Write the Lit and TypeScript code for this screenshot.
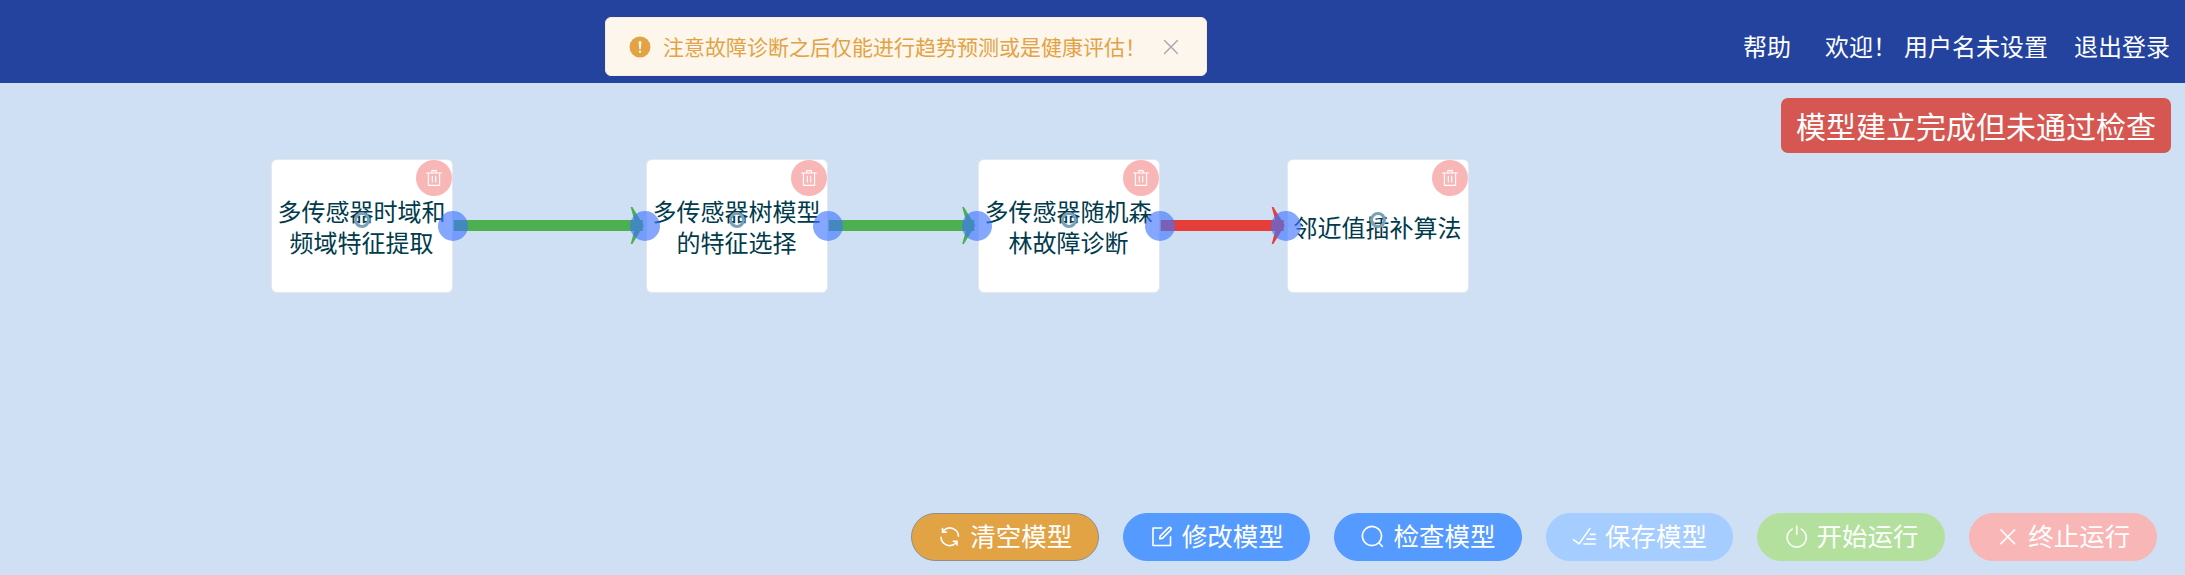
import { LitElement, html, css, svg } from "lit";
import { customElement } from "lit/decorators.js";

const ICONS: Record<string, string> = {
  refresh:
    "M771.776 794.88A384 384 0 0 1 128 512h64a320 320 0 0 0 555.712 216.448H654.72a32 32 0 1 1 0-64h149.056a32 32 0 0 1 32 32v148.928a32 32 0 1 1-64 0v-50.56zM276.288 295.616h92.992a32 32 0 0 1 0 64H220.16a32 32 0 0 1-32-32V178.56a32 32 0 0 1 64 0v50.56A384 384 0 0 1 896.128 512h-64a320 320 0 0 0-555.776-216.384z",
  edit:
    "M832 512a32 32 0 1 1 64 0v352a32 32 0 0 1-32 32H160a32 32 0 0 1-32-32V160a32 32 0 0 1 32-32h352a32 32 0 0 1 0 64H192v640h640V512zM469.952 554.24l52.8-7.552L847.104 222.4a32 32 0 1 0-45.248-45.248L477.44 501.44l-7.552 52.8zm422.4-422.4a96 96 0 0 1 0 135.808l-331.84 331.84a32 32 0 0 1-18.112 9.088L436.8 623.68a32 32 0 0 1-36.224-36.224l15.104-105.6a32 32 0 0 1 9.024-18.112l331.904-331.84a96 96 0 0 1 135.744 0z",
  search:
    "m795.904 750.72 124.992 124.928a32 32 0 0 1-45.248 45.248L750.656 795.904a416 416 0 1 1 45.248-45.248zM480 832a352 352 0 1 0 0-704 352 352 0 0 0 0 704z",
  finished:
    "M280.768 753.728 691.456 167.04a32 32 0 1 1 52.416 36.672L314.24 817.472a32 32 0 0 1-45.44 7.296l-230.4-172.8a32 32 0 0 1 38.4-51.2l203.968 152.96zM736 448a32 32 0 1 1 0-64h192a32 32 0 1 1 0 64H736zM608 640a32 32 0 0 1 0-64h319.936a32 32 0 1 1 0 64H608zM480 832a32 32 0 1 1 0-64h447.936a32 32 0 1 1 0 64H480z",
  power:
    "M352 159.872V230.4a352 352 0 1 0 320 0v-70.528A416.128 416.128 0 0 1 512 960a416 416 0 0 1-160-800.128zM512 64q32 0 32 32v320q0 32-32 32t-32-32V96q0-32 32-32z",
  close:
    "M764.288 214.592 512 466.88 259.712 214.592a31.936 31.936 0 0 0-45.12 45.12L466.752 512 214.528 764.224a31.936 31.936 0 1 0 45.12 45.184L512 557.184l252.288 252.288a31.936 31.936 0 0 0 45.12-45.12L557.12 512.064l252.288-252.352a31.936 31.936 0 1 0-45.12-45.184z",
  trash:
    "M160 256H96a32 32 0 0 1 0-64h256V95.936a32 32 0 0 1 32-32h256a32 32 0 0 1 32 32V192h256a32 32 0 1 1 0 64h-64v672a32 32 0 0 1-32 32H192a32 32 0 0 1-32-32V256zm448-64v-64H416v64h192zM224 896h576V256H224v640zm192-128a32 32 0 0 1-32-32V416a32 32 0 0 1 64 0v320a32 32 0 0 1-32 32zm192 0a32 32 0 0 1-32-32V416a32 32 0 0 1 64 0v320a32 32 0 0 1-32 32z",
  warning:
    "M512 64a448 448 0 1 1 0 896 448 448 0 0 1 0-896zm0 192a58.432 58.432 0 0 0-58.24 63.744l23.36 256.384a35.072 35.072 0 0 0 69.76 0l23.296-256.384A58.432 58.432 0 0 0 512 256zm0 512a51.2 51.2 0 1 0 0-102.4 51.2 51.2 0 0 0 0 102.4z",
};

const icon = (name: string) =>
  html`<svg class="icon" viewBox="0 0 1024 1024"><path d=${ICONS[name]}></path></svg>`;

const NODES = [
  { x: 271, lines: ["多传感器时域和", "频域特征提取"] },
  { x: 646, lines: ["多传感器树模型", "的特征选择"] },
  { x: 978, lines: ["多传感器随机森", "林故障诊断"] },
  { x: 1287, lines: ["邻近值插补算法"] },
];

const LINKS = [
  { from: 453.7, to: 643.7, color: "#4caf50" },
  { from: 828.7, to: 975.2, color: "#4caf50" },
  { from: 1160.7, to: 1284.7, color: "#e53e38" },
];

const PORTS = [453, 645, 828, 977, 1160, 1286];

const ACTIONS = [
  { icon: "refresh", label: "清空模型", kind: "warning" },
  { icon: "edit", label: "修改模型", kind: "primary" },
  { icon: "search", label: "检查模型", kind: "primary" },
  { icon: "finished", label: "保存模型", kind: "primary-off" },
  { icon: "power", label: "开始运行", kind: "success-off" },
  { icon: "close", label: "终止运行", kind: "danger-off" },
];

@customElement("app-root")
export class AppRoot extends LitElement {
  static styles = css`
    :host {
      display: flex;
      flex-direction: column;
      position: relative;
      height: 575px;
      overflow: hidden;
      background: #cfe0f5;
      font-family: "Noto Sans CJK SC", sans-serif;
      white-space: nowrap;
    }
    .icon { width: 1em; height: 1em; fill: currentColor; display: block; flex: none; }
    .header {
      flex: none;
      height: 83px;
      box-sizing: border-box;
      padding: 12px 14px 4px 0;
      display: flex;
      justify-content: flex-end;
      align-items: center;
      background: #24439f;
      color: #fff;
      font-size: 24px;
      line-height: 36px;
    }
    .help { margin-right: 34px; }
    .welcome { margin-right: 7px; }
    .user { margin-right: 26px; }
    .exit { margin-right: 1px; }
    .toast {
      position: absolute;
      left: 605px;
      top: 17px;
      width: 602px;
      height: 59px;
      box-sizing: border-box;
      border: 1px solid #faecd8;
      border-radius: 6px;
      background: #fdf6ec;
      color: #e2a344;
      display: flex;
      align-items: center;
      padding: 0 23px 0 22px;
      font-size: 21px;
    }
    .toast .message { padding-bottom: 2px; }
    .toast .mark { font-size: 24px; margin-right: 11px; }
    .toast .dismiss { font-size: 24px; color: #a8abb2; margin-left: auto; }
    .status {
      align-self: flex-end;
      margin: 15px 14px 0 0;
      height: 55px;
      line-height: 55px;
      padding: 0 15px;
      border-radius: 7px;
      background: #d65751;
      color: #fff;
      font-size: 30px;
    }
    .node {
      position: absolute;
      top: 159px;
      width: 182px;
      height: 133.5px;
      box-sizing: border-box;
      border: 1px solid #e4e7ed;
      border-radius: 6px;
      background: #fff;
      color: #003a4c;
      font-size: 24px;
      line-height: 31px;
      text-align: center;
      display: flex;
      flex-direction: column;
      justify-content: center;
      padding: 1px 1px 0 0;
    }
    .remove {
      position: absolute;
      right: 0;
      top: 0;
      width: 36px;
      height: 36px;
      border-radius: 50%;
      background: #f8b6b6;
      color: #fff;
      font-size: 18px;
      display: flex;
      align-items: center;
      justify-content: center;
    }
    .ring {
      position: absolute;
      left: 82px;
      top: 52px;
      width: 16px;
      height: 16px;
      box-sizing: border-box;
      border: 3.5px solid #7ba1b8;
      border-radius: 50%;
    }
    .wires { position: absolute; left: 0; top: 0; width: 2185px; height: 575px; pointer-events: none; }
    .actions {
      margin-top: auto;
      margin-bottom: 14px;
      padding-right: 28.5px;
      display: flex;
      justify-content: flex-end;
      gap: 24px;
    }
    .action {
      width: 187.6px;
      height: 48px;
      box-sizing: border-box;
      border: 1px solid transparent;
      border-radius: 24px;
      display: flex;
      align-items: center;
      justify-content: center;
      gap: 7.5px;
      color: #fff;
      font-family: inherit;
      font-size: 25.5px;
      line-height: 42px;
      padding: 0;
    }
    .action span { padding-bottom: 4px; }
    .warning { background: #e2a344; border-color: #8f8f8f; }
    .primary { background: #559bff; border-color: #559bff; }
    .primary-off { background: #a5cdff; border-color: #a5cdff; }
    .success-off { background: #b3e19d; border-color: #b3e19d; }
    .danger-off { background: #f8b6b6; border-color: #f8b6b6; }
  `;

  render() {
    return html`
      <header class="header">
        <span class="help">帮助</span>
        <span class="welcome">欢迎！</span>
        <span class="user">用户名未设置</span>
        <span class="exit">退出登录</span>
      </header>
      <div class="status">模型建立完成但未通过检查</div>
      ${NODES.map(
        (n) => html`<div class="node" style="left:${n.x}px">
          ${n.lines.map((l) => html`<div>${l}</div>`)}
          <div class="ring"></div>
          <div class="remove">${icon("trash")}</div>
        </div>`
      )}
      <svg class="wires" viewBox="0 0 2185 575">
        ${LINKS.map(
          (l) => svg`
            <rect x=${l.from} y="220" width=${l.to - l.from - 1} height="11" fill=${l.color}></rect>
            <path transform="translate(${l.to} 225.5)" fill=${l.color}
              d="M0 0L-11.3 -18.5H-13L-8 0L-13 18.5H-11.3Z"></path>`
        )}
        ${PORTS.map((x) => svg`<circle cx=${x} cy="226" r="15" fill="#3e74ff" fill-opacity="0.63"></circle>`)}
      </svg>
      <div class="actions">
        ${ACTIONS.map(
          (a) => html`<button class="action ${a.kind}">${icon(a.icon)}<span>${a.label}</span></button>`
        )}
      </div>
      <div class="toast">
        <span class="mark">${icon("warning")}</span>
        <span class="message">注意故障诊断之后仅能进行趋势预测或是健康评估！</span>
        <span class="dismiss">${icon("close")}</span>
      </div>
    `;
  }
}
